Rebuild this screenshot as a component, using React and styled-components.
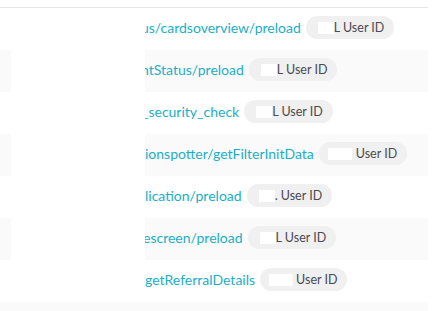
import React from "react";
import styled, { createGlobalStyle } from "styled-components";

const Global = createGlobalStyle`
  html, body { margin: 0; padding: 0; background: #ffffff; }
  body { font-family: Lato, "Open Sans", sans-serif; }
`;

const Page = styled.div`
  width: 436px;
  height: 311px;
  overflow: hidden;
  padding-top: 7px;
  box-sizing: border-box;
`;

const Table = styled.div`
  width: 428px;
  border-top: 1px solid #e6e6e6;
  display: flex;
  flex-direction: column;
`;

const Row = styled.div`
  height: 42px;
  display: flex;
  align-items: center;
  padding-bottom: 3px;
  box-sizing: border-box;
  background: ${(p) => (p.$alt ? "#fafafa" : "#ffffff")};
`;

const Gutter = styled.div`
  width: 11px;
  align-self: stretch;
  flex: none;
`;

const Masked = styled.div`
  width: 134px;
  align-self: stretch;
  margin-bottom: -3px;
  background: #ffffff;
  flex: none;
`;

const PathCell = styled.div`
  overflow: hidden;
  white-space: nowrap;
  flex: none;
  display: flex;
`;

const PathText = styled.span`
  color: #1aafc6;
  font-size: 14px;
  margin-left: ${(p) => -p.$clip}px;
`;

const Pill = styled.span`
  display: inline-flex;
  align-items: center;
  height: 23px;
  border-radius: 12px;
  background: #f0f0f0;
  padding: 0 10px 0 ${(p) => p.$lead}px;
  margin-left: 5px;
  font-size: 12.5px;
  color: #4a4a4f;
  white-space: pre;
`;

const Redact = styled.span`
  display: inline-block;
  width: ${(p) => p.$w}px;
  height: 12px;
  background: #ffffff;
  margin-right: ${(p) => p.$gap}px;
`;

const rows = [
  { path: "us/cardsoverview/preload", clip: 4, lead: 12, mask: 16, gap: 0, label: "L User ID" },
  { path: "ntStatus/preload", clip: 4, lead: 12, mask: 16, gap: 0, label: "L User ID" },
  { path: "_security_check", clip: 3, lead: 12, mask: 16, gap: 0, label: "L User ID" },
  { path: "ionspotter/getFilterInitData", clip: 0, lead: 9, mask: 24, gap: 4, label: "User ID" },
  { path: "lication/preload", clip: 0, lead: 12, mask: 16, gap: 0, label: ". User ID" },
  { path: "escreen/preload", clip: 2, lead: 12, mask: 16, gap: 0, label: "L User ID" },
  { path: "getReferralDetails", clip: 0, lead: 9, mask: 24, gap: 3, label: "User ID" },
];

export default function App() {
  return (
    <Page>
      <Global />
      <Table>
        {rows.map((r, i) => (
          <Row key={i} $alt={i % 2 === 1}>
            <Gutter />
            <Masked />
            <PathCell>
              <PathText $clip={r.clip}>{r.path}</PathText>
            </PathCell>
            <Pill $lead={r.lead}>
              <Redact $w={r.mask} $gap={r.gap} />
              {r.label}
            </Pill>
          </Row>
        ))}
        <Row $alt />
      </Table>
    </Page>
  );
}
